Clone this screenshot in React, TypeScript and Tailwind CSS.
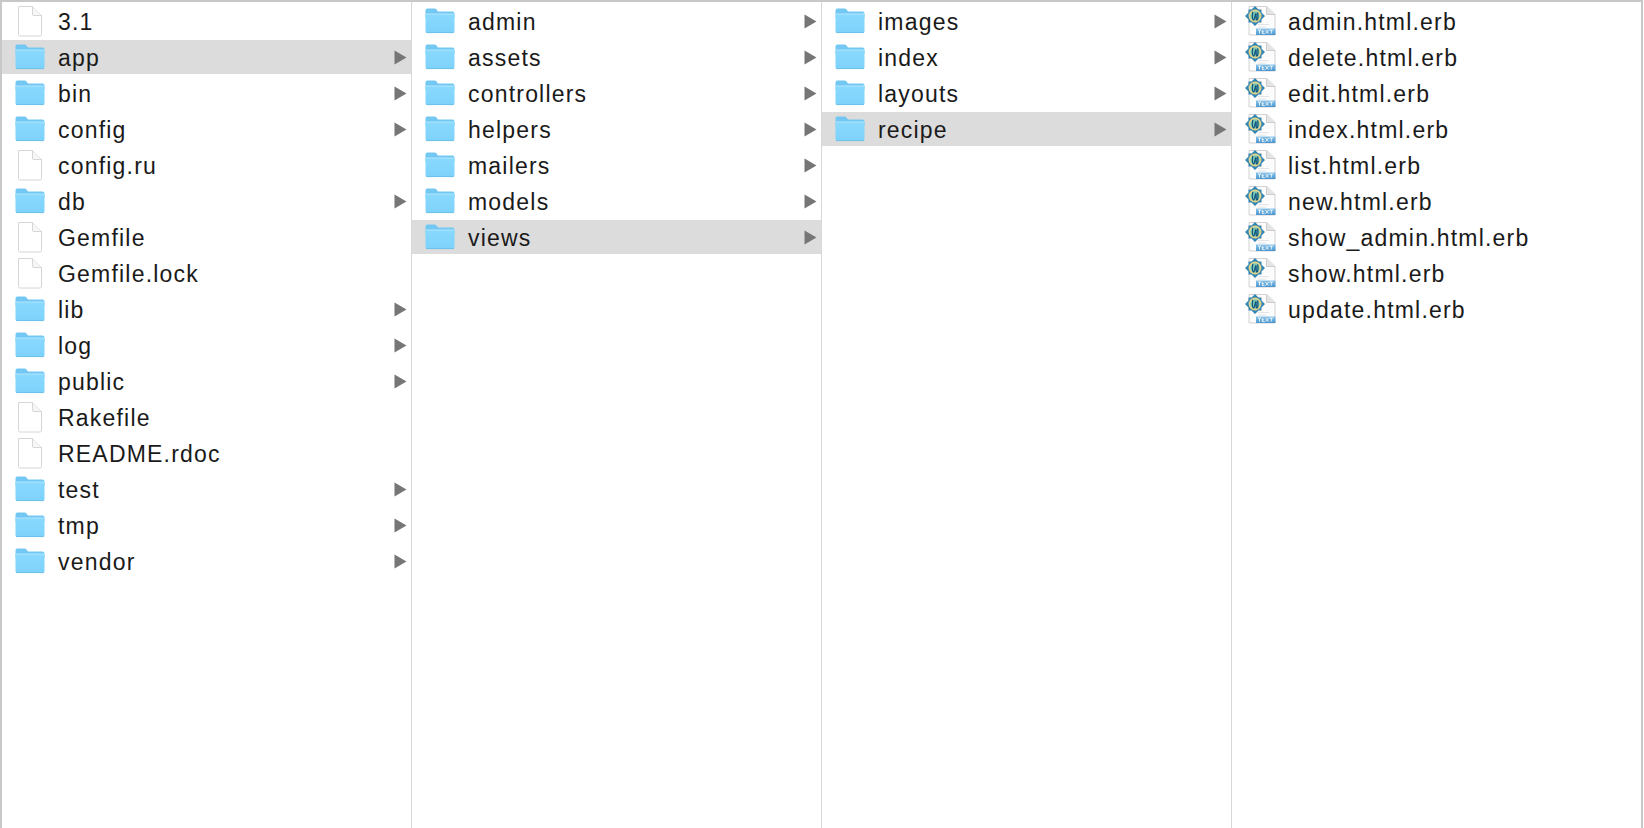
import React from "react";

type Kind = "file" | "folder" | "erb";
type Item = { name: string; kind: Kind; selected?: boolean };

function FileIcon() {
  return (
    <svg width="26" height="32" viewBox="0 0 26 32" className="shrink-0">
      <path d="M1.5 1.5H15.5L24.5 10.5V29.5Q24.5 31 23 31H3Q1.5 31 1.5 29.5Z" fill="#ffffff" stroke="#d6d6d6" strokeWidth="1" />
      <path d="M15.5 1.5V9Q15.5 10.5 17 10.5H24.5" fill="#f6f6f6" stroke="#d6d6d6" strokeWidth="1" />
    </svg>
  );
}

function FolderIcon() {
  return (
    <svg width="30" height="26" viewBox="0 0 30 26" className="shrink-0">
      <defs>
        <linearGradient id="folderBody" x1="0" y1="0" x2="0" y2="1">
          <stop offset="0" stopColor="#8ad9fe" />
          <stop offset="1" stopColor="#7dd2fb" />
        </linearGradient>
      </defs>
      <path d="M0.5 2.5Q0.5 0.5 2.5 0.5H9.5Q10.7 0.5 11.5 1.5L13 3.5H27.5Q29.5 3.5 29.5 5.5V10H0.5Z" fill="#72c8f2" />
      <path d="M0.5 6H29.5V23Q29.5 25 27.5 25H2.5Q0.5 25 0.5 23Z" fill="url(#folderBody)" />
      <path d="M0.5 6H29.5" stroke="#b2e6fd" strokeWidth="1" />
      <path d="M1 24.6H29" stroke="#66bbe6" strokeWidth="0.8" />
    </svg>
  );
}

function ErbIcon() {
  return (
    <svg width="33" height="32" viewBox="0 0 33 32" className="shrink-0">
      <defs>
        <linearGradient id="erbBand" x1="0" y1="0" x2="0" y2="1">
          <stop offset="0" stopColor="#8cc4e8" />
          <stop offset="1" stopColor="#4a97d0" />
        </linearGradient>
      </defs>
      <path d="M5 1.5H23L31 9.5V30H5Z" fill="#fcfcfc" stroke="#d2d2d2" strokeWidth="1" />
      <path d="M22.5 1.5V9.5H31" fill="#e4e4e4" stroke="#cccccc" strokeWidth="1" />
      <path d="M14 22H22M14 19.5H25" stroke="#e4e4e4" strokeWidth="1" />
      <rect x="12" y="23.5" width="19.5" height="6.5" fill="url(#erbBand)" />
      <path d="M14 25H17M15.5 25V28.6M18.3 25V28.6H20.6M18.3 26.8H20.2M21.6 25L24.6 28.6M24.6 25L21.6 28.6M25.6 25H29M27.3 25V28.6" stroke="#ffffff" strokeWidth="0.8" fill="none" />
      <path d="M11 1L14.5 4.5L17.5 4.5L17.5 7.5L21 11L17.5 14.5L17.5 17.5L14.5 17.5L11 21L7.5 17.5L4.5 17.5L4.5 14.5L1 11L4.5 7.5L4.5 4.5L7.5 4.5Z" fill="#3486b4" />
      <circle cx="11" cy="11" r="6.4" fill="#e4d488" />
      <circle cx="11" cy="11" r="4.7" fill="#7ccbb8" />
      <path d="M8.8 6.8C8 11.5 8.4 15 9.7 15C11 15 11 8.5 11.8 8.5C12.6 8.5 11.6 15 12.8 15C14.1 15 14.2 10.5 13.6 7.4" stroke="#14567f" strokeWidth="1.25" fill="none" />
    </svg>
  );
}

function Chevron() {
  return (
    <svg width="13" height="15" viewBox="0 0 13 15" className="shrink-0">
      <path d="M0.5 0.5L12.5 7.5L0.5 14.5Z" fill="#767676" />
    </svg>
  );
}

function Row({ item }: { item: Item }) {
  const icon =
    item.kind === "folder" ? (
      <div className="flex w-[30px] ml-[13px]"><FolderIcon /></div>
    ) : item.kind === "erb" ? (
      <div className="flex w-[33px] ml-[12px]"><ErbIcon /></div>
    ) : (
      <div className="flex w-[26px] ml-[15px]"><FileIcon /></div>
    );
  return (
    <div className={`flex h-[34px] items-center ${item.selected ? "bg-[#dcdcdc]" : ""}`}>
      {icon}
      <span
        className={`${
          item.kind === "folder" ? "ml-[13px]" : item.kind === "erb" ? "ml-[11px]" : "ml-[15px]"
        } flex-1 pt-[2px] text-[23px] tracking-[1.2px] leading-none text-[#1a1a1a] whitespace-nowrap font-['Liberation_Sans',sans-serif]`}
      >
        {item.name}
      </span>
      {item.kind === "folder" && (
        <div className="mr-[4px] flex">
          <Chevron />
        </div>
      )}
    </div>
  );
}

const f = (name: string, selected = false): Item => ({ name, kind: "folder", selected });
const d = (name: string): Item => ({ name, kind: "file" });
const e = (name: string): Item => ({ name, kind: "erb" });

const columns: Item[][] = [
  [d("3.1"), f("app", true), f("bin"), f("config"), d("config.ru"), f("db"), d("Gemfile"), d("Gemfile.lock"), f("lib"), f("log"), f("public"), d("Rakefile"), d("README.rdoc"), f("test"), f("tmp"), f("vendor")],
  [f("admin"), f("assets"), f("controllers"), f("helpers"), f("mailers"), f("models"), f("views", true)],
  [f("images"), f("index"), f("layouts"), f("recipe", true)],
  [e("admin.html.erb"), e("delete.html.erb"), e("edit.html.erb"), e("index.html.erb"), e("list.html.erb"), e("new.html.erb"), e("show_admin.html.erb"), e("show.html.erb"), e("update.html.erb")],
];

export default function App() {
  return (
    <div className="h-[828px] w-[1644px] bg-white pr-[1px]">
      <div className="flex h-full border-t-[2px] border-l-[2px] border-r-[2px] border-[#c8c8c8]">
        {columns.map((col, i) => (
          <div
            key={i}
            className={`flex flex-col gap-[2px] pt-[2px] ${
              i < 3 ? "w-[410px] border-r border-[#d8d8d8] shrink-0" : "flex-1"
            }`}
          >
            {col.map((item) => (
              <Row key={item.name} item={item} />
            ))}
          </div>
        ))}
      </div>
    </div>
  );
}
